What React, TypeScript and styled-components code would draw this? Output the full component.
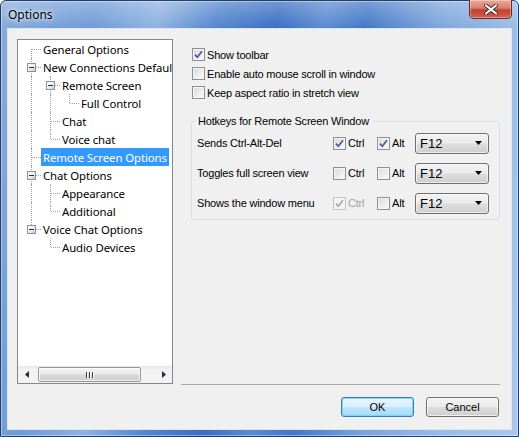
import styled, { createGlobalStyle } from 'styled-components';

const GlobalStyle = createGlobalStyle`
  html, body { margin: 0; padding: 0; background: #ffffff; }
  body { width: 519px; height: 437px; overflow: hidden; }
  * { box-sizing: border-box; }
`;

const uiFont = `"Liberation Sans", Arial, sans-serif`;
const treeFont = `"Noto Sans", "Open Sans", sans-serif`;

const Window = styled.div`
  width: 519px;
  height: 437px;
  display: flex;
  flex-direction: column;
  padding: 0 6px 6px;
  border: 1px solid #1f3e6c;
  border-radius: 6px 6px 0 0;
  background:
    linear-gradient(180deg, rgba(255, 255, 255, 0.28) 0, rgba(255, 255, 255, 0) 27px),
    linear-gradient(100deg, #86abdc 0%, #6f9bd6 16%, #8fb2e0 27%, #5386cd 37%, #3a6ec3 47%, #5b8bd1 55%, #4378c6 62%, #7ca4da 74%, #9abce6 87%, #abc7ea 100%);
  box-shadow: inset 0 0 0 1px rgba(255, 255, 255, 0.4);
`;

const TitleBar = styled.div`
  height: 27px;
  flex-shrink: 0;
  display: flex;
  align-items: flex-start;
`;

const Title = styled.div`
  margin: 6px 0 0 1px;
  font-family: ${treeFont};
  font-size: 12px;
  line-height: 16px;
  color: #000000;
  text-shadow: 0 0 6px rgba(255, 255, 255, 0.9), 0 0 3px rgba(255, 255, 255, 0.8);
`;

const CloseButton = styled.div`
  margin: -1px 0 0 auto;
  width: 43px;
  height: 19px;
  display: flex;
  align-items: center;
  justify-content: center;
  border: 1px solid #6a2a22;
  border-top: none;
  border-radius: 0 0 5px 5px;
  background: linear-gradient(180deg, #e9a99b 0%, #d9806f 45%, #c2402f 55%, #d5604c 100%);
  box-shadow: inset 0 0 0 1px rgba(255, 255, 255, 0.35);
`;

const Client = styled.div`
  flex: 1;
  display: flex;
  flex-direction: column;
  background: #f0f0f0;
  border: 1px solid #dce6f3;
`;

const Body = styled.div`
  display: flex;
  padding: 10px 0 0 9px;
`;

const TreeBox = styled.div`
  width: 156px;
  height: 345px;
  flex-shrink: 0;
  display: flex;
  flex-direction: column;
  border: 1px solid #828790;
  background: #ffffff;
`;

const TreeScroll = styled.div`
  flex: 1;
  overflow: hidden;
  padding: 0 0 0 3px;
  font-family: ${treeFont};
  font-size: 11.4px;
  letter-spacing: -0.1px;
  color: #000000;
`;

const TreeRow = styled.div`
  display: flex;
  height: 18px;
  white-space: nowrap;
`;

const Guide = styled.div<{ $through: boolean }>`
  position: relative;
  width: 19px;
  flex-shrink: 0;
  &::before {
    content: '';
    display: ${(p) => (p.$through ? 'block' : 'none')};
    position: absolute;
    left: 10px;
    top: 0;
    bottom: 0;
    border-left: 1px dotted #a0a0a0;
  }
`;

const Branch = styled.div<{ $top: boolean; $bottom: boolean }>`
  position: relative;
  width: 19px;
  flex-shrink: 0;
  &::before {
    content: '';
    position: absolute;
    left: 10px;
    top: ${(p) => (p.$top ? '0' : '9px')};
    bottom: ${(p) => (p.$bottom ? '0' : '9px')};
    border-left: 1px dotted #a0a0a0;
  }
  &::after {
    content: '';
    position: absolute;
    left: 11px;
    right: -1px;
    top: 9px;
    border-top: 1px dotted #a0a0a0;
  }
`;

const Expander = styled.div`
  position: absolute;
  z-index: 1;
  left: 6px;
  top: 5px;
  width: 9px;
  height: 9px;
  border: 1px solid #919191;
  background: linear-gradient(135deg, #ffffff 0%, #f0f0f0 50%, #c8c8c8 100%);
  &::after {
    content: '';
    position: absolute;
    left: 1px;
    top: 3px;
    width: 5px;
    height: 1px;
    background: #1e2f5a;
  }
`;

const ItemLabel = styled.div<{ $selected: boolean }>`
  margin-left: 1px;
  padding: 0 2px;
  line-height: 20px;
  height: 18px;
  overflow: hidden;
  background: ${(p) => (p.$selected ? '#3399ff' : 'transparent')};
  color: ${(p) => (p.$selected ? '#ffffff' : '#000000')};
`;

const HScroll = styled.div`
  height: 17px;
  flex-shrink: 0;
  display: flex;
  align-items: center;
  background: linear-gradient(180deg, #e6e6e6 0%, #f2f2f2 20%, #f2f2f2 100%);
`;

const ArrowButton = styled.div`
  width: 17px;
  height: 17px;
  flex-shrink: 0;
  display: flex;
  align-items: center;
  justify-content: center;
`;

const Track = styled.div`
  flex: 1;
  height: 17px;
  display: flex;
  align-items: center;
  padding-left: 3px;
`;

const Thumb = styled.div`
  width: 103px;
  height: 15px;
  display: flex;
  align-items: center;
  justify-content: center;
  gap: 1px;
  border: 1px solid #979797;
  border-radius: 2px;
  background: linear-gradient(180deg, #f4f4f4 0%, #e9e9e9 48%, #d7d7d7 52%, #cfcfcf 100%);
  box-shadow: inset 0 0 0 1px rgba(255, 255, 255, 0.7);
`;

const GripLine = styled.span`
  width: 1px;
  height: 6px;
  background: #3b3b3b;
  box-shadow: 1px 0 0 #ffffff;
  margin-right: 1px;
`;

const RightPanel = styled.div`
  width: 319px;
  height: 346px;
  margin-left: 8px;
  padding: 6px 0 0 11px;
  border-bottom: 1px solid #a9a9a9;
  font-family: ${uiFont};
  font-size: 11px;
  letter-spacing: -0.2px;
  color: #000000;
`;

const OptionRow = styled.label`
  height: 19px;
  display: flex;
  align-items: center;
  gap: 2px;
`;

const Box = styled.span<{ $disabled?: boolean }>`
  width: 13px;
  height: 13px;
  flex-shrink: 0;
  display: flex;
  align-items: center;
  justify-content: center;
  border: 1px solid ${(p) => (p.$disabled ? '#c4c4c4' : '#8e8f8f')};
  background: ${(p) =>
    p.$disabled
      ? '#f4f4f4'
      : 'linear-gradient(135deg, #d6d6d6 0%, #e9e9e9 45%, #fbfbfb 100%)'};
  box-shadow: inset 0 0 0 1px ${(p) => (p.$disabled ? '#f4f4f4' : '#f6f6f6')};
`;

const BoxText = styled.span<{ $disabled?: boolean }>`
  color: ${(p) => (p.$disabled ? '#a0a0a0' : '#000000')};
  white-space: nowrap;
`;

const Group = styled.fieldset`
  width: 309px;
  margin: 13px 0 0 -1px;
  padding: 0 10px 1px 5px;
  border: 1px solid #d5dfe5;
  border-radius: 3px;
`;

const Legend = styled.legend`
  padding: 0 3px;
  margin-left: -2px;
  line-height: 13px;
`;

const HotkeyRow = styled.div`
  height: 30px;
  display: grid;
  grid-template-columns: 136px 44px 38px 74px;
  align-items: center;
`;

const Combo = styled.div`
  height: 21px;
  display: flex;
  align-items: center;
  justify-content: space-between;
  padding: 0 6px 0 4px;
  border: 1px solid #707070;
  border-radius: 3px;
  background: linear-gradient(180deg, #f2f2f2 0%, #ebebeb 48%, #dddddd 52%, #cfcfcf 100%);
  box-shadow: inset 0 0 0 1px rgba(255, 255, 255, 0.6);
  font-size: 13px;
  letter-spacing: 0;
`;

const Footer = styled.div`
  display: flex;
  justify-content: flex-end;
  gap: 12px;
  padding: 12px 12px 0 0;
`;

const Button = styled.button<{ $default?: boolean }>`
  width: 73px;
  height: 20px;
  padding: 0;
  font-family: ${uiFont};
  font-size: 11px;
  color: #000000;
  border-radius: 3px;
  border: 1px solid ${(p) => (p.$default ? '#3c7fb1' : '#707070')};
  background: ${(p) =>
    p.$default
      ? 'linear-gradient(180deg, #eaf6fd 0%, #d9f0fc 48%, #bee6fd 52%, #a7d9f5 100%)'
      : 'linear-gradient(180deg, #f2f2f2 0%, #ebebeb 48%, #dddddd 52%, #cfcfcf 100%)'};
  box-shadow: inset 0 0 0 1px ${(p) => (p.$default ? 'rgba(120, 210, 250, 0.9)' : 'rgba(255, 255, 255, 0.7)')};
`;

type TreeNode = { label: string; children?: TreeNode[] };
type FlatRow = {
  label: string;
  trail: boolean[];
  top: boolean;
  bottom: boolean;
  hasChildren: boolean;
};

const tree: TreeNode[] = [
  { label: 'General Options' },
  {
    label: 'New Connections Defaults',
    children: [
      { label: 'Remote Screen', children: [{ label: 'Full Control' }] },
      { label: 'Chat' },
      { label: 'Voice chat' },
    ],
  },
  { label: 'Remote Screen Options' },
  { label: 'Chat Options', children: [{ label: 'Appearance' }, { label: 'Additional' }] },
  { label: 'Voice Chat Options', children: [{ label: 'Audio Devices' }] },
];

const flatten = (nodes: TreeNode[], trail: boolean[] = []): FlatRow[] =>
  nodes.flatMap((node, i) => {
    const last = i === nodes.length - 1;
    const row: FlatRow = {
      label: node.label,
      trail,
      top: trail.length > 0 || i > 0,
      bottom: !last,
      hasChildren: !!node.children,
    };
    return [row, ...(node.children ? flatten(node.children, [...trail, !last]) : [])];
  });

const Check = ({ color }: { color: string }) => (
  <svg width="9" height="9" viewBox="0 0 9 9">
    <path d="M1 4.6 L3.3 7.2 L8 1.2" fill="none" stroke={color} strokeWidth="1.7" />
  </svg>
);

const CheckBox = ({ label, checked, disabled }: { label: string; checked?: boolean; disabled?: boolean }) => (
  <OptionRow>
    <Box $disabled={disabled}>{checked && <Check color={disabled ? '#a8a8a8' : '#4159a0'} />}</Box>
    <BoxText $disabled={disabled}>{label}</BoxText>
  </OptionRow>
);

const hotkeys = [
  { label: 'Sends Ctrl-Alt-Del', ctrl: true, alt: true, ctrlDisabled: false },
  { label: 'Toggles full screen view', ctrl: false, alt: false, ctrlDisabled: false },
  { label: 'Shows the window menu', ctrl: true, alt: false, ctrlDisabled: true },
];

export default function App() {
  const rows = flatten(tree);
  return (
    <>
      <GlobalStyle />
      <Window>
        <TitleBar>
          <Title>Options</Title>
          <CloseButton>
            <svg width="14" height="11" viewBox="0 0 14 11">
              <path d="M2 1.5 L12 9.5 M12 1.5 L2 9.5" stroke="#4d2a26" strokeWidth="4" strokeLinecap="round" />
              <path d="M2 1.5 L12 9.5 M12 1.5 L2 9.5" stroke="#ffffff" strokeWidth="2.2" strokeLinecap="round" />
            </svg>
          </CloseButton>
        </TitleBar>
        <Client>
          <Body>
            <TreeBox>
              <TreeScroll>
                {rows.map((row) => (
                  <TreeRow key={row.label}>
                    {row.trail.map((through, i) => (
                      <Guide key={i} $through={through} />
                    ))}
                    <Branch $top={row.top} $bottom={row.bottom}>
                      {row.hasChildren && <Expander />}
                    </Branch>
                    <ItemLabel $selected={row.label === 'Remote Screen Options'}>{row.label}</ItemLabel>
                  </TreeRow>
                ))}
              </TreeScroll>
              <HScroll>
                <ArrowButton>
                  <svg width="4" height="7" viewBox="0 0 4 7">
                    <path d="M4 0 L0 3.5 L4 7 Z" fill="#2b2b2b" />
                  </svg>
                </ArrowButton>
                <Track>
                  <Thumb>
                    <GripLine />
                    <GripLine />
                    <GripLine />
                  </Thumb>
                </Track>
                <ArrowButton>
                  <svg width="4" height="7" viewBox="0 0 4 7">
                    <path d="M0 0 L4 3.5 L0 7 Z" fill="#2b2b2b" />
                  </svg>
                </ArrowButton>
              </HScroll>
            </TreeBox>
            <RightPanel>
              <CheckBox label="Show toolbar" checked />
              <CheckBox label="Enable auto mouse scroll in window" />
              <CheckBox label="Keep aspect ratio in stretch view" />
              <Group>
                <Legend>Hotkeys for Remote Screen Window</Legend>
                {hotkeys.map((h) => (
                  <HotkeyRow key={h.label}>
                    <BoxText>{h.label}</BoxText>
                    <CheckBox label="Ctrl" checked={h.ctrl} disabled={h.ctrlDisabled} />
                    <CheckBox label="Alt" checked={h.alt} />
                    <Combo>
                      <span>F12</span>
                      <svg width="7" height="4" viewBox="0 0 7 4">
                        <path d="M0 0 L7 0 L3.5 4 Z" fill="#000000" />
                      </svg>
                    </Combo>
                  </HotkeyRow>
                ))}
              </Group>
            </RightPanel>
          </Body>
          <Footer>
            <Button $default>OK</Button>
            <Button>Cancel</Button>
          </Footer>
        </Client>
      </Window>
    </>
  );
}
